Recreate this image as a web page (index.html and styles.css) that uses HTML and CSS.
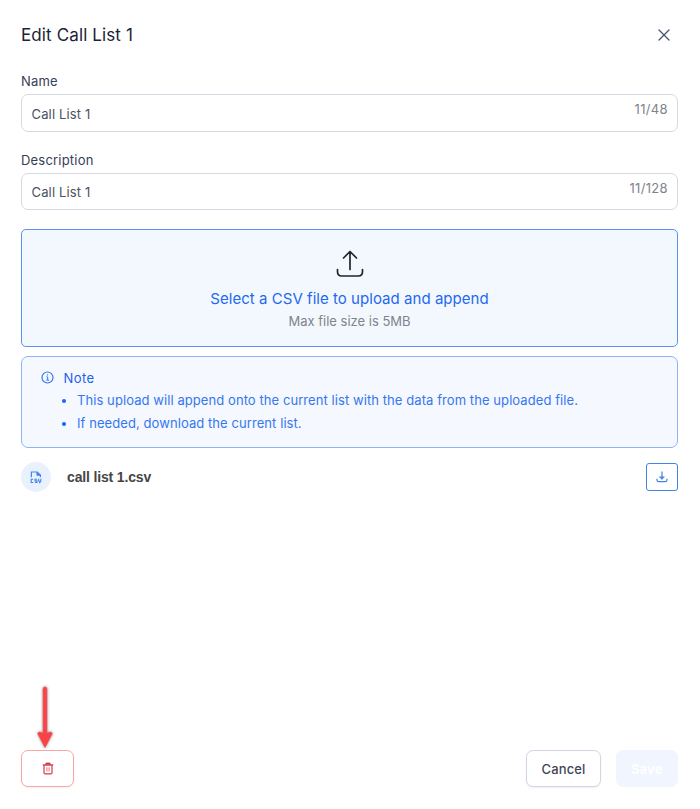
FILE: index.html
```html
<!DOCTYPE html>
<html lang="en">
<head>
<meta charset="utf-8">
<title>Edit Call List 1</title>
<link rel="stylesheet" href="styles.css">
</head>
<body>
<main class="panel">
  <header class="header">
    <h1 class="title">Edit Call List 1</h1>
    <button class="close" aria-label="Close">
      <svg width="12" height="12" viewBox="0 0 12 12" fill="none" stroke="#46536a" stroke-width="1.3" stroke-linecap="round"><path d="M1 1l10 10M11 1L1 11"/></svg>
    </button>
  </header>

  <section class="field">
    <span class="label">Name</span>
    <div class="input"><span>Call List 1</span><span class="count">11/48</span></div>
  </section>
  <section class="field field-description">
    <span class="label">Description</span>
    <div class="input"><span>Call List 1</span><span class="count">11/128</span></div>
  </section>

  <section class="dropzone">
    <svg class="upload" width="28" height="28" viewBox="0 0 28 28" fill="none" stroke="#20252c" stroke-width="1.7" stroke-linecap="round" stroke-linejoin="round"><path d="M14 19.500V2M7.500 8L14 1.500 20.500 8M1.500 19.500v2.200q0 4.300 4.300 4.300h16.400q4.300 0 4.300-4.300V19.500"/></svg>
    <p class="drop-title">Select a CSV file to upload and append</p>
    <p class="drop-hint">Max file size is 5MB</p>
  </section>

  <section class="note">
    <div class="note-head">
      <svg width="13" height="13" viewBox="0 0 13 13" fill="none" stroke="#3276f2" stroke-width="1.2"><circle cx="6.500" cy="6.500" r="5.500"/><path d="M5.400 5.900h1.300v3M5.200 9.100h2.900" stroke-width="1"/><circle cx="6.500" cy="3.900" r=".7" fill="#3276f2" stroke="none"/></svg>
      <span>Note</span>
    </div>
    <ul class="note-list">
      <li>This upload will append onto the current list with the data from the uploaded file.</li>
      <li>If needed, download the current list.</li>
    </ul>
  </section>

  <section class="file">
    <span class="file-icon">
      <svg width="12" height="13" viewBox="0 0 12 13" fill="none" stroke="#4384f0" stroke-width="1.2"><path d="M1.400 6.200V1h5.800l3.200 3v2.200"/><path d="M6.800 1v3.400h3.600z" fill="#4384f0" stroke-width=".6"/><path d="M3.300 8.300H1.200v3.200h2.100M7.100 8.300H5.100v1.600h1.900v1.600H4.900M8.700 7.800v1.700l1.100 2.100 1.100-2.100V7.800" stroke-width="1.100"/></svg>
    </span>
    <span class="file-name">call list 1.csv</span>
    <button class="download" aria-label="Download">
      <svg width="12" height="12" viewBox="0 0 12 12" fill="none" stroke="#4384e8" stroke-width="1.200" stroke-linecap="round"><path d="M6 .8v6M1 8v1q0 1.700 1.700 1.700h6.600Q11 10.700 11 9V8"/><path d="M3.500 5.800h5L6 8.400z" fill="#4384e8" stroke-width=".5"/></svg>
    </button>
  </section>

  <footer class="footer">
    <button class="button delete" aria-label="Delete">
      <svg width="12" height="13" viewBox="0 0 12 13" fill="none" stroke="#d63c46" stroke-width="1.200"><path d="M.8 3h10.400" stroke-width="1.500"/><path d="M3.500 2.200L4.200.9h3.600l.7 1.300z" fill="#d63c46" stroke-width=".7"/><path d="M2 3.500v7.300q0 1.100 1.100 1.100h5.800q1.100 0 1.100-1.100V3.500"/><path d="M4.900 5.300v4.200M7.100 5.300v4.200" stroke-width="1" stroke="#e27370"/></svg>
    </button>
    <button class="button cancel">Cancel</button>
    <button class="button save" disabled>Save</button>
    <svg class="pointer" width="24" height="70" viewBox="0 0 24 70"><path d="M10.200 4q0-2 1.800-2t1.800 2v44.500l4-1.500 1.400 1.500L12 62.500 4.800 48.500l1.400-1.500 4 1.500z" fill="#fc4147" stroke="#fc4147" stroke-width=".6" stroke-linejoin="round"/></svg>
  </footer>
</main>
</body>
</html>
```

FILE: styles.css
```css
* {
  box-sizing: border-box;
}

body {
  margin: 0;
  background: #fff;
  font-family: Inter, "Liberation Sans", sans-serif;
  font-size: 13px;
  color: #4b5261;
}

button {
  display: flex;
  align-items: center;
  justify-content: center;
  padding: 0;
  background: #fff;
  font: inherit;
}

svg {
  display: block;
  flex: none;
}

.panel {
  display: flex;
  flex-direction: column;
  height: 809px;
  padding: 20px 22px 22px 21px;
}

.header {
  display: flex;
  align-items: center;
  justify-content: space-between;
  height: 30px;
  padding-right: 8px;
}

.title {
  margin: 0;
  font-size: 17px;
  font-weight: 400;
  letter-spacing: 0.12px;
  color: #1c2334;
}

.close {
  border: 0;
}

.field {
  margin-top: 22px;
}

.field-description {
  margin-top: 19px;
}

.label {
  display: block;
  height: 22px;
  line-height: 19px;
  font-size: 13px;
  font-weight: 400;
  letter-spacing: 0.2px;
  color: #364056;
}

.input {
  display: flex;
  justify-content: space-between;
  height: 38px;
  padding: 0 9px 0 9.5px;
  border: 1px solid #d5d9e3;
  border-radius: 7px;
  line-height: 38px;
  letter-spacing: 0.15px;
}

.field-description .input {
  height: 37px;
  line-height: 37px;
}

.input .count {
  line-height: 29px;
  letter-spacing: 0.35px;
  color: #80838a;
}

.dropzone {
  display: flex;
  flex-direction: column;
  align-items: center;
  height: 118px;
  margin-top: 19px;
  padding-top: 20px;
  border: 1px solid #5a93e8;
  border-radius: 5px;
  background: #f3f8ff;
}

.drop-title {
  margin: 11px 0 0;
  font-size: 15px;
  line-height: 20px;
  font-weight: 400;
  letter-spacing: 0.04px;
  color: #2468ee;
}

.drop-hint {
  margin: 3px 0 0;
  line-height: 18px;
  color: #808389;
}

.note {
  height: 92px;
  margin-top: 9px;
  padding: 10px 19px;
  border: 1px solid #8fb3f8;
  border-radius: 7px;
  background: #f5f8ff;
  color: #3477ef;
}

.note-head {
  display: flex;
  align-items: center;
  gap: 9.5px;
  height: 21px;
  font-weight: 400;
  letter-spacing: 0.4px;
  color: #1c60ea;
}

.note-list {
  margin: 1px 0 0;
  padding-left: 36px;
  line-height: 22.5px;
  letter-spacing: 0.075px;
}

.note-list li::marker {
  color: #1765ff;
}

.file {
  display: flex;
  align-items: center;
  height: 30px;
  margin-top: 14px;
}

.file-icon {
  display: flex;
  align-items: center;
  justify-content: center;
  width: 30px;
  height: 30px;
  border-radius: 50%;
  background: #eaf1fe;
}

.file-name {
  margin-left: 16px;
  font-family: "Liberation Sans", Arial, sans-serif;
  font-size: 14px;
  letter-spacing: -0.15px;
  font-weight: 700;
  color: #454545;
}

.download {
  width: 32px;
  height: 28px;
  margin-left: auto;
  border: 1px solid #4384e8;
  border-radius: 3px;
}

.footer {
  position: relative;
  display: flex;
  gap: 14.5px;
  margin-top: auto;
}

.button {
  height: 37px;
  border: 1px solid #d2d6e3;
  border-radius: 7px;
  font-weight: 500;
  letter-spacing: 0.1px;
  box-shadow: 0 1px 2px #10182812;
}

.delete {
  width: 53px;
  margin-right: auto;
  border-color: #faa7a3;
}

.cancel {
  width: 75px;
  color: #3e4558;
}

.save {
  width: 62.5px;
  border-color: #f0f5ff;
  background: #f0f5ff;
  color: #fff;
  font-weight: 700;
  box-shadow: none;
}

.pointer {
  position: absolute;
  left: 12px;
  top: -65px;
  filter: drop-shadow(0 0 1.5px #0008);
}
```
